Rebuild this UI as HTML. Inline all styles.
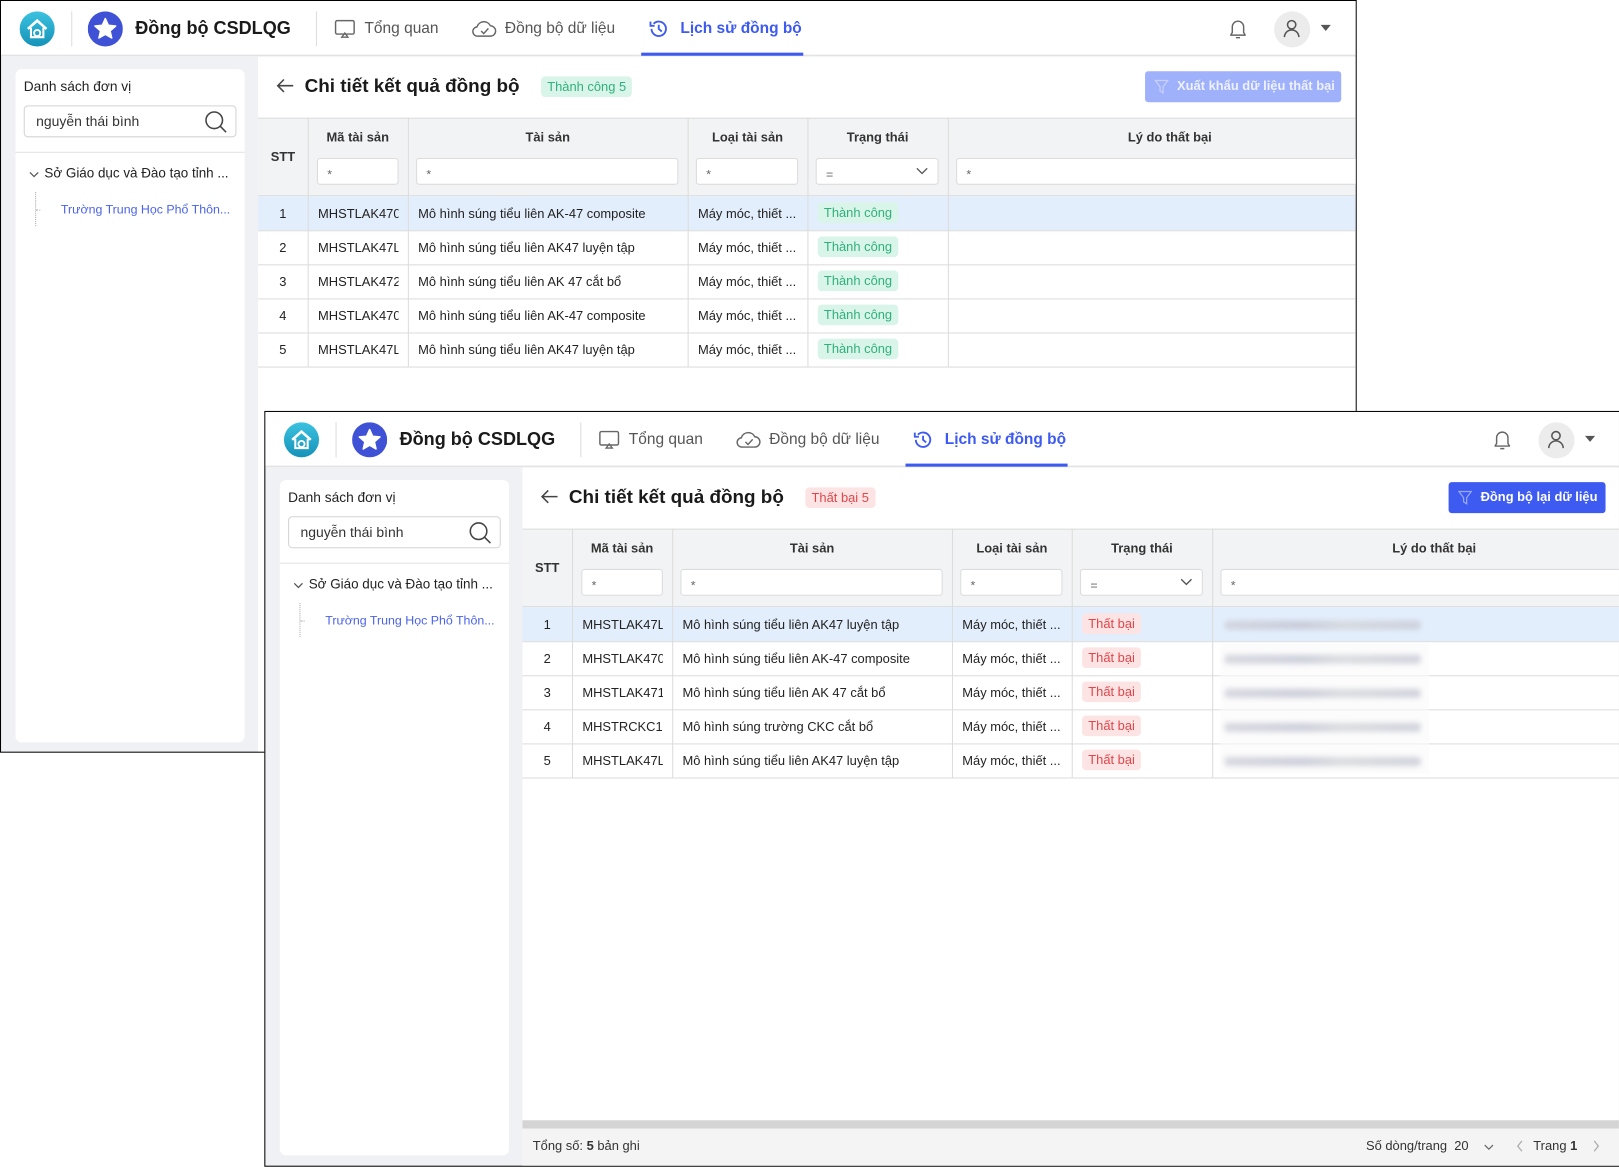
<!DOCTYPE html>
<html><head><meta charset="utf-8">
<style>
*{box-sizing:border-box;margin:0;padding:0}
html,body{width:1619px;height:1166px;overflow:hidden;background:#fff;font-family:"Liberation Sans","Noto Sans CJK SC",sans-serif;color:#222}
#wrap{position:absolute;left:0;top:0;width:1568px;height:1130px;transform:scale(1.0325);transform-origin:0 0}
.win{position:absolute;border:1px solid #000;background:#f0f1f4;overflow:hidden}
.a{position:absolute}
.hdr{position:absolute;left:0;top:0;right:0;height:53px;background:#fff;border-bottom:1px solid #dcdcdc}
.sep{position:absolute;top:10px;width:1px;height:34px;background:#ddd}
.title{font-size:17.5px;font-weight:bold;color:#1a1a1a;white-space:nowrap}
.tab{font-size:15px;color:#555;white-space:nowrap}
.tab.on{color:#3d5af1;font-weight:bold}
.panel{position:absolute;left:14px;top:66px;width:222px;background:#fff;border-radius:6px}
.main{position:absolute;left:249px;top:54px;right:0;bottom:0;background:#fff}
.inp{position:absolute;background:#fff;border:1px solid #dcdcdc;border-radius:3px;font-size:12px;color:#666;padding:8px 0 0 9px}
.th{position:absolute;font-size:12.5px;font-weight:bold;color:#333;text-align:center}
.cell{position:absolute;font-size:12.5px;color:#222;white-space:nowrap;overflow:hidden}
.vl{position:absolute;width:1px;background:#dcdcdc}
.hl{position:absolute;height:1px;background:#dcdcdc}
.badge{position:absolute;font-size:12.5px;border-radius:4px;padding:3px 6px;white-space:nowrap}
.g{background:#d9f5ea;color:#30b07c}
.r{background:#fde4e4;color:#e0464a}
.blurbox{position:absolute;left:676px;width:202px;background:rgba(250,250,250,.6)}
.blur{position:absolute;height:9px;width:190px;background:linear-gradient(90deg,#cfd0da,#c4c6d4 40%,#d3d6da 60%,#c8cad6);filter:blur(2.5px);opacity:.8;border-radius:3px}
.pt{font-size:13.3px;color:#222}
</style></head><body><div id="wrap">

<!-- BACK WINDOW -->
<div class="win" style="left:0;top:0;width:1314px;height:729px">
 <div class="hdr">
  <svg class="a" style="left:18px;top:10px" width="34" height="34" viewBox="0 0 34 34"><defs><linearGradient id="lg1" x1="0" y1="0" x2="0" y2="1"><stop offset="0" stop-color="#3cc2e0"/><stop offset="1" stop-color="#1592b8"/></linearGradient></defs><circle cx="17" cy="17" r="17" fill="url(#lg1)"/><path d="M8 17 L17 9 L26 17" stroke="#fff" stroke-width="2.5" fill="none"/><path d="M11 16 V25 H23 V16" stroke="#fff" stroke-width="2" fill="none"/><circle cx="17" cy="21" r="3" fill="none" stroke="#fff" stroke-width="1.8"/></svg>
  <div class="sep" style="left:68px"></div>
  <svg class="a" style="left:84px;top:10px" width="34" height="34" viewBox="0 0 34 34"><circle cx="17" cy="17" r="17" fill="#3f51d5"/><path d="M17 7 L19.9 13.5 L27 14.2 L21.6 18.9 L23.2 25.8 L17 22.2 L10.8 25.8 L12.4 18.9 L7 14.2 L14.1 13.5 Z" fill="#fff" stroke="#fff" stroke-linejoin="round" stroke-width="1.5"/></svg>
  <div class="a title" style="left:130px;top:16px">Đồng bộ CSDLQG</div>
  <div class="sep" style="left:305px"></div>
  <svg class="a" style="left:323px;top:18px" width="20" height="18" viewBox="0 0 20 18"><rect x="1" y="1" width="18" height="13" rx="1.5" fill="none" stroke="#666" stroke-width="1.4"/><path d="M7 17 L10 13 L13 17 Z" fill="none" stroke="#666" stroke-width="1.3"/></svg>
  <div class="a tab" style="left:352px;top:18px">Tổng quan</div>
  <svg class="a" style="left:456px;top:17px" width="24" height="20" viewBox="0 0 24 20"><path d="M6 17 H18 A5 5 0 0 0 18 7 A7 7 0 0 0 5 8 A4.5 4.5 0 0 0 6 17 Z" fill="none" stroke="#666" stroke-width="1.4"/><path d="M9 12 L11.5 14.5 L16 9.5" fill="none" stroke="#666" stroke-width="1.4"/></svg>
  <div class="a tab" style="left:488px;top:18px">Đồng bộ dữ liệu</div>
  <svg class="a" style="left:627px;top:17px" width="20" height="20" viewBox="0 0 20 20"><path d="M3 10 A7 7 0 1 0 5 5" fill="none" stroke="#3d5af1" stroke-width="1.8"/><path d="M2 3 V7 H6" fill="none" stroke="#3d5af1" stroke-width="1.8"/><path d="M10 6 V10 L13 12.5" fill="none" stroke="#3d5af1" stroke-width="1.8"/></svg>
  <div class="a tab on" style="left:658px;top:18px">Lịch sử đồng bộ</div>
  <div class="a" style="left:620px;top:50px;width:157px;height:3px;background:#3d5af1"></div>
  <svg class="a" style="left:1187px;top:16px" width="22" height="22" viewBox="0 0 22 22"><path d="M4 17 H18 L16.5 14.5 V9 A5.5 5.5 0 0 0 5.5 9 V14.5 Z" fill="none" stroke="#666" stroke-width="1.4" stroke-linejoin="round"/><path d="M9 19.5 H13" stroke="#666" stroke-width="1.4"/></svg>
  <div class="a" style="left:1233px;top:10px;width:35px;height:35px;border-radius:50%;background:#ececec"></div>
  <svg class="a" style="left:1241px;top:17px" width="18" height="20" viewBox="0 0 18 20"><circle cx="9" cy="6" r="4" fill="none" stroke="#555" stroke-width="1.5"/><path d="M2 18 A7 7 0 0 1 16 18" fill="none" stroke="#555" stroke-width="1.5"/></svg>
  <svg class="a" style="left:1278px;top:23px" width="10" height="6"><path d="M0 0 H10 L5 6 Z" fill="#555"/></svg>
 </div>
 <div class="panel" style="height:652px">
  <div class="a pt" style="left:8px;top:9px">Danh sách đơn vị</div>
  <div class="a" style="left:8px;top:35px;width:206px;height:31px;border:1px solid #d4d4d4;border-radius:4px"></div>
  <div class="a" style="left:20px;top:43px;font-size:13.5px;color:#333">nguyễn thái bình</div>
  <svg class="a" style="left:182px;top:39px" width="24" height="24" viewBox="0 0 24 24"><circle cx="10.5" cy="10.5" r="8" fill="none" stroke="#444" stroke-width="1.5"/><path d="M16.5 16.5 L22 22" stroke="#444" stroke-width="1.5"/></svg>
  <div class="a" style="left:0;top:80px;width:222px;height:1px;background:#e2e2e2"></div>
  <svg class="a" style="left:13px;top:98px" width="10" height="8"><path d="M1 2 L5 6 L9 2" fill="none" stroke="#555" stroke-width="1.2"/></svg>
  <div class="a" style="left:28px;top:93px;font-size:13px;color:#222">Sở Giáo dục và Đào tạo tỉnh ...</div>
  <div class="a" style="left:19px;top:119px;width:0;height:33px;border-left:1px dotted #aaa"></div>
  <div class="a" style="left:20px;top:136px;width:4px;border-top:1px dotted #aaa"></div>
  <div class="a" style="left:44px;top:129px;font-size:12px;color:#4b63e8">Trường Trung Học Phổ Thôn...</div>
 </div>
 <div class="main">
  <svg class="a" style="left:17px;top:20px" width="18" height="16" viewBox="0 0 18 16"><path d="M17 8 H2 M8 2 L2 8 L8 14" fill="none" stroke="#444" stroke-width="1.5"/></svg>
  <div class="a title" style="left:45px;top:17px;font-size:18.3px">Chi tiết kết quả đồng bộ</div>
  <div class="badge g" style="left:274px;top:19px">Thành công 5</div>
  <div class="a" style="left:859px;top:14px;width:190px;height:30px;border-radius:3px;background:#9fb1fa"></div>
  <svg class="a" style="left:868px;top:22px" width="14" height="14" viewBox="0 0 14 14"><path d="M1 1 H13 L8.5 7 V13 L5.5 11 V7 Z" fill="none" stroke="#c7d1fc" stroke-width="1.2"/></svg>
  <div class="a" style="left:890px;top:21px;font-size:12.5px;font-weight:bold;color:#eef1ff">Xuất khẩu dữ liệu thất bại</div>
  <div class="a" style="left:0;top:59px;right:0;height:76px;background:#f2f3f5;border-top:1px solid #dcdcdc;border-bottom:1px solid #dcdcdc"></div>
  <div class="th" style="left:0;top:90px;width:48px">STT</div>
  <div class="th" style="left:48px;top:71px;width:97px">Mã tài sản</div>
  <div class="th" style="left:145px;top:71px;width:271px">Tài sản</div>
  <div class="th" style="left:416px;top:71px;width:116px">Loại tài sản</div>
  <div class="th" style="left:532px;top:71px;width:136px">Trạng thái</div>
  <div class="th" style="left:668px;top:71px;width:430px">Lý do thất bại</div>
  <div class="inp" style="left:57px;top:98px;width:79px;height:26px">*</div>
  <div class="inp" style="left:153px;top:98px;width:254px;height:26px">*</div>
  <div class="inp" style="left:424px;top:98px;width:99px;height:26px">*</div>
  <div class="inp" style="left:540px;top:98px;width:119px;height:26px">=</div>
  <svg class="a" style="left:637px;top:107px" width="12" height="8"><path d="M1 1 L6 6 L11 1" fill="none" stroke="#555" stroke-width="1.3"/></svg>
  <div class="inp" style="left:676px;top:98px;width:420px;height:26px">*</div>
  <div class="a" style="left:0;top:135px;right:0;height:33px;background:#e3eefc"></div>
  <div class="vl" style="left:48px;top:59px;height:241px"></div>
  <div class="vl" style="left:145px;top:59px;height:241px"></div>
  <div class="vl" style="left:416px;top:59px;height:241px"></div>
  <div class="vl" style="left:532px;top:59px;height:241px"></div>
  <div class="vl" style="left:668px;top:59px;height:241px"></div>
  <div class="hl" style="left:0;right:0;top:168px"></div>
  <div class="hl" style="left:0;right:0;top:201px"></div>
  <div class="hl" style="left:0;right:0;top:234px"></div>
  <div class="hl" style="left:0;right:0;top:267px"></div>
  <div class="hl" style="left:0;right:0;top:300px"></div>
  <div class="cell" style="left:0;width:48px;text-align:center;top:145px">1</div>
  <div class="cell" style="left:0;width:48px;text-align:center;top:178px">2</div>
  <div class="cell" style="left:0;width:48px;text-align:center;top:211px">3</div>
  <div class="cell" style="left:0;width:48px;text-align:center;top:244px">4</div>
  <div class="cell" style="left:0;width:48px;text-align:center;top:277px">5</div>
  <div class="cell" style="left:58px;width:78px;top:145px">MHSTLAK470</div>
  <div class="cell" style="left:58px;width:78px;top:178px">MHSTLAK47L</div>
  <div class="cell" style="left:58px;width:78px;top:211px">MHSTLAK472</div>
  <div class="cell" style="left:58px;width:78px;top:244px">MHSTLAK470</div>
  <div class="cell" style="left:58px;width:78px;top:277px">MHSTLAK47L</div>
  <div class="cell" style="left:155px;top:145px">Mô hình súng tiểu liên AK-47 composite</div>
  <div class="cell" style="left:155px;top:178px">Mô hình súng tiểu liên AK47 luyện tập</div>
  <div class="cell" style="left:155px;top:211px">Mô hình súng tiểu liên AK 47 cắt bổ</div>
  <div class="cell" style="left:155px;top:244px">Mô hình súng tiểu liên AK-47 composite</div>
  <div class="cell" style="left:155px;top:277px">Mô hình súng tiểu liên AK47 luyện tập</div>
  <div class="cell" style="left:426px;top:145px">Máy móc, thiết ...</div>
  <div class="cell" style="left:426px;top:178px">Máy móc, thiết ...</div>
  <div class="cell" style="left:426px;top:211px">Máy móc, thiết ...</div>
  <div class="cell" style="left:426px;top:244px">Máy móc, thiết ...</div>
  <div class="cell" style="left:426px;top:277px">Máy móc, thiết ...</div>
  <div class="badge g" style="left:542px;top:141px">Thành công</div>
  <div class="badge g" style="left:542px;top:174px">Thành công</div>
  <div class="badge g" style="left:542px;top:207px">Thành công</div>
  <div class="badge g" style="left:542px;top:240px">Thành công</div>
  <div class="badge g" style="left:542px;top:273px">Thành công</div>
 </div>
</div>

<!-- FRONT WINDOW -->
<div class="win" style="left:256px;top:398px;width:1313px;height:732px">
 <div class="hdr">
  <svg class="a" style="left:18px;top:10px" width="34" height="34" viewBox="0 0 34 34"><defs><linearGradient id="lg2" x1="0" y1="0" x2="0" y2="1"><stop offset="0" stop-color="#3cc2e0"/><stop offset="1" stop-color="#1592b8"/></linearGradient></defs><circle cx="17" cy="17" r="17" fill="url(#lg2)"/><path d="M8 17 L17 9 L26 17" stroke="#fff" stroke-width="2.5" fill="none"/><path d="M11 16 V25 H23 V16" stroke="#fff" stroke-width="2" fill="none"/><circle cx="17" cy="21" r="3" fill="none" stroke="#fff" stroke-width="1.8"/></svg>
  <div class="sep" style="left:68px"></div>
  <svg class="a" style="left:84px;top:10px" width="34" height="34" viewBox="0 0 34 34"><circle cx="17" cy="17" r="17" fill="#3f51d5"/><path d="M17 7 L19.9 13.5 L27 14.2 L21.6 18.9 L23.2 25.8 L17 22.2 L10.8 25.8 L12.4 18.9 L7 14.2 L14.1 13.5 Z" fill="#fff" stroke="#fff" stroke-linejoin="round" stroke-width="1.5"/></svg>
  <div class="a title" style="left:130px;top:16px">Đồng bộ CSDLQG</div>
  <div class="sep" style="left:305px"></div>
  <svg class="a" style="left:323px;top:18px" width="20" height="18" viewBox="0 0 20 18"><rect x="1" y="1" width="18" height="13" rx="1.5" fill="none" stroke="#666" stroke-width="1.4"/><path d="M7 17 L10 13 L13 17 Z" fill="none" stroke="#666" stroke-width="1.3"/></svg>
  <div class="a tab" style="left:352px;top:18px">Tổng quan</div>
  <svg class="a" style="left:456px;top:17px" width="24" height="20" viewBox="0 0 24 20"><path d="M6 17 H18 A5 5 0 0 0 18 7 A7 7 0 0 0 5 8 A4.5 4.5 0 0 0 6 17 Z" fill="none" stroke="#666" stroke-width="1.4"/><path d="M9 12 L11.5 14.5 L16 9.5" fill="none" stroke="#666" stroke-width="1.4"/></svg>
  <div class="a tab" style="left:488px;top:18px">Đồng bộ dữ liệu</div>
  <svg class="a" style="left:627px;top:17px" width="20" height="20" viewBox="0 0 20 20"><path d="M3 10 A7 7 0 1 0 5 5" fill="none" stroke="#3d5af1" stroke-width="1.8"/><path d="M2 3 V7 H6" fill="none" stroke="#3d5af1" stroke-width="1.8"/><path d="M10 6 V10 L13 12.5" fill="none" stroke="#3d5af1" stroke-width="1.8"/></svg>
  <div class="a tab on" style="left:658px;top:18px">Lịch sử đồng bộ</div>
  <div class="a" style="left:620px;top:50px;width:157px;height:3px;background:#3d5af1"></div>
  <svg class="a" style="left:1187px;top:16px" width="22" height="22" viewBox="0 0 22 22"><path d="M4 17 H18 L16.5 14.5 V9 A5.5 5.5 0 0 0 5.5 9 V14.5 Z" fill="none" stroke="#666" stroke-width="1.4" stroke-linejoin="round"/><path d="M9 19.5 H13" stroke="#666" stroke-width="1.4"/></svg>
  <div class="a" style="left:1233px;top:10px;width:35px;height:35px;border-radius:50%;background:#ececec"></div>
  <svg class="a" style="left:1241px;top:17px" width="18" height="20" viewBox="0 0 18 20"><circle cx="9" cy="6" r="4" fill="none" stroke="#555" stroke-width="1.5"/><path d="M2 18 A7 7 0 0 1 16 18" fill="none" stroke="#555" stroke-width="1.5"/></svg>
  <svg class="a" style="left:1278px;top:23px" width="10" height="6"><path d="M0 0 H10 L5 6 Z" fill="#555"/></svg>
 </div>
 <div class="panel" style="height:654px">
  <div class="a pt" style="left:8px;top:9px">Danh sách đơn vị</div>
  <div class="a" style="left:8px;top:35px;width:206px;height:31px;border:1px solid #d4d4d4;border-radius:4px"></div>
  <div class="a" style="left:20px;top:43px;font-size:13.5px;color:#333">nguyễn thái bình</div>
  <svg class="a" style="left:182px;top:39px" width="24" height="24" viewBox="0 0 24 24"><circle cx="10.5" cy="10.5" r="8" fill="none" stroke="#444" stroke-width="1.5"/><path d="M16.5 16.5 L22 22" stroke="#444" stroke-width="1.5"/></svg>
  <div class="a" style="left:0;top:80px;width:222px;height:1px;background:#e2e2e2"></div>
  <svg class="a" style="left:13px;top:98px" width="10" height="8"><path d="M1 2 L5 6 L9 2" fill="none" stroke="#555" stroke-width="1.2"/></svg>
  <div class="a" style="left:28px;top:93px;font-size:13px;color:#222">Sở Giáo dục và Đào tạo tỉnh ...</div>
  <div class="a" style="left:19px;top:119px;width:0;height:33px;border-left:1px dotted #aaa"></div>
  <div class="a" style="left:20px;top:136px;width:4px;border-top:1px dotted #aaa"></div>
  <div class="a" style="left:44px;top:129px;font-size:12px;color:#4b63e8">Trường Trung Học Phổ Thôn...</div>
 </div>
 <div class="main">
  <svg class="a" style="left:17px;top:20px" width="18" height="16" viewBox="0 0 18 16"><path d="M17 8 H2 M8 2 L2 8 L8 14" fill="none" stroke="#444" stroke-width="1.5"/></svg>
  <div class="a title" style="left:45px;top:17px;font-size:18.3px">Chi tiết kết quả đồng bộ</div>
  <div class="badge r" style="left:274px;top:19px">Thất bại 5</div>
  <div class="a" style="left:897px;top:14px;width:152px;height:30px;border-radius:3px;background:#3d5af1"></div>
  <svg class="a" style="left:906px;top:22px" width="14" height="14" viewBox="0 0 14 14"><path d="M1 1 H13 L8.5 7 V13 L5.5 11 V7 Z" fill="none" stroke="#9aa9f5" stroke-width="1.2"/></svg>
  <div class="a" style="left:928px;top:21px;font-size:12.5px;font-weight:bold;color:#fff">Đồng bộ lại dữ liệu</div>
  <div class="a" style="left:0;top:59px;right:0;height:76px;background:#f2f3f5;border-top:1px solid #dcdcdc;border-bottom:1px solid #dcdcdc"></div>
  <div class="th" style="left:0;top:90px;width:48px">STT</div>
  <div class="th" style="left:48px;top:71px;width:97px">Mã tài sản</div>
  <div class="th" style="left:145px;top:71px;width:271px">Tài sản</div>
  <div class="th" style="left:416px;top:71px;width:116px">Loại tài sản</div>
  <div class="th" style="left:532px;top:71px;width:136px">Trạng thái</div>
  <div class="th" style="left:668px;top:71px;width:430px">Lý do thất bại</div>
  <div class="inp" style="left:57px;top:98px;width:79px;height:26px">*</div>
  <div class="inp" style="left:153px;top:98px;width:254px;height:26px">*</div>
  <div class="inp" style="left:424px;top:98px;width:99px;height:26px">*</div>
  <div class="inp" style="left:540px;top:98px;width:119px;height:26px">=</div>
  <svg class="a" style="left:637px;top:107px" width="12" height="8"><path d="M1 1 L6 6 L11 1" fill="none" stroke="#555" stroke-width="1.3"/></svg>
  <div class="inp" style="left:676px;top:98px;width:420px;height:26px">*</div>
  <div class="a" style="left:0;top:135px;right:0;height:33px;background:#e3eefc"></div>
  <div class="vl" style="left:48px;top:59px;height:241px"></div>
  <div class="vl" style="left:145px;top:59px;height:241px"></div>
  <div class="vl" style="left:416px;top:59px;height:241px"></div>
  <div class="vl" style="left:532px;top:59px;height:241px"></div>
  <div class="vl" style="left:668px;top:59px;height:241px"></div>
  <div class="hl" style="left:0;right:0;top:168px"></div>
  <div class="hl" style="left:0;right:0;top:201px"></div>
  <div class="hl" style="left:0;right:0;top:234px"></div>
  <div class="hl" style="left:0;right:0;top:267px"></div>
  <div class="hl" style="left:0;right:0;top:300px"></div>
  <div class="cell" style="left:0;width:48px;text-align:center;top:145px">1</div>
  <div class="cell" style="left:0;width:48px;text-align:center;top:178px">2</div>
  <div class="cell" style="left:0;width:48px;text-align:center;top:211px">3</div>
  <div class="cell" style="left:0;width:48px;text-align:center;top:244px">4</div>
  <div class="cell" style="left:0;width:48px;text-align:center;top:277px">5</div>
  <div class="cell" style="left:58px;width:78px;top:145px">MHSTLAK47L</div>
  <div class="cell" style="left:58px;width:78px;top:178px">MHSTLAK470</div>
  <div class="cell" style="left:58px;width:78px;top:211px">MHSTLAK471</div>
  <div class="cell" style="left:58px;width:78px;top:244px">MHSTRCKC1</div>
  <div class="cell" style="left:58px;width:78px;top:277px">MHSTLAK47L</div>
  <div class="cell" style="left:155px;top:145px">Mô hình súng tiểu liên AK47 luyện tập</div>
  <div class="cell" style="left:155px;top:178px">Mô hình súng tiểu liên AK-47 composite</div>
  <div class="cell" style="left:155px;top:211px">Mô hình súng tiểu liên AK 47 cắt bổ</div>
  <div class="cell" style="left:155px;top:244px">Mô hình súng trường CKC cắt bổ</div>
  <div class="cell" style="left:155px;top:277px">Mô hình súng tiểu liên AK47 luyện tập</div>
  <div class="cell" style="left:426px;top:145px">Máy móc, thiết ...</div>
  <div class="cell" style="left:426px;top:178px">Máy móc, thiết ...</div>
  <div class="cell" style="left:426px;top:211px">Máy móc, thiết ...</div>
  <div class="cell" style="left:426px;top:244px">Máy móc, thiết ...</div>
  <div class="cell" style="left:426px;top:277px">Máy móc, thiết ...</div>
  <div class="badge r" style="left:542px;top:141px">Thất bại</div>
  <div class="badge r" style="left:542px;top:174px">Thất bại</div>
  <div class="badge r" style="left:542px;top:207px">Thất bại</div>
  <div class="badge r" style="left:542px;top:240px">Thất bại</div>
  <div class="badge r" style="left:542px;top:273px">Thất bại</div>
  <div class="blurbox" style="top:170px;height:126px"></div>
  <div class="blur" style="left:680px;top:148px"></div>
  <div class="blur" style="left:680px;top:181px"></div>
  <div class="blur" style="left:680px;top:214px"></div>
  <div class="blur" style="left:680px;top:247px"></div>
  <div class="blur" style="left:680px;top:280px"></div>
  <div class="a" style="left:0;right:0;top:632px;height:8px;background:#d4d4d4"></div>
  <div class="a" style="left:0;right:0;top:640px;bottom:0;background:#f4f4f4"></div>
  <div class="a" style="left:10px;top:650px;font-size:12.5px;color:#333">Tổng số: <b>5</b> bản ghi</div>
  <div class="a" style="left:817px;top:650px;font-size:12.5px;color:#333;white-space:nowrap">Số dòng/trang&nbsp; 20</div>
  <svg class="a" style="left:931px;top:655px" width="10" height="7"><path d="M1 1 L5 5 L9 1" fill="none" stroke="#666" stroke-width="1.2"/></svg>
  <svg class="a" style="left:962px;top:651px" width="8" height="12"><path d="M6 1 L2 6 L6 11" fill="none" stroke="#aaa" stroke-width="1.2"/></svg>
  <div class="a" style="left:979px;top:650px;font-size:12.5px;color:#333">Trang <b>1</b></div>
  <svg class="a" style="left:1036px;top:651px" width="8" height="12"><path d="M2 1 L6 6 L2 11" fill="none" stroke="#aaa" stroke-width="1.2"/></svg>
 </div>
</div>

</div></body></html>
